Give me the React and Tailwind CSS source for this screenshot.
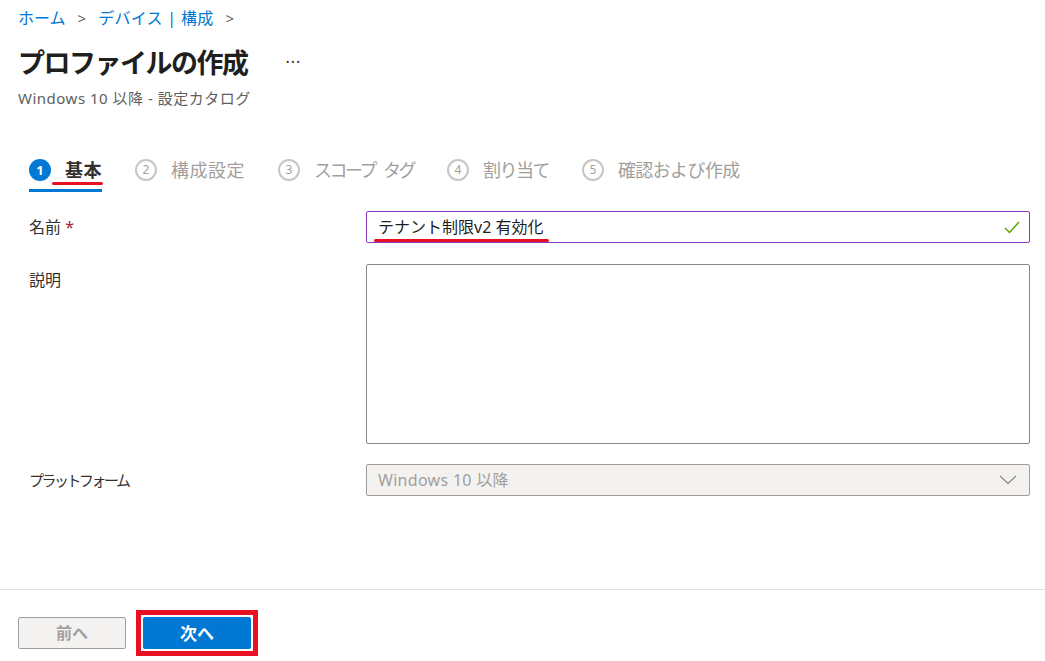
import React from "react";

const font = { fontFamily: '"Noto Sans", "Noto Sans CJK JP", sans-serif' };

const steps = [
  { n: 1, label: "基本", active: true, track: "tracking-[0.5px]" },
  { n: 2, label: "構成設定", track: "tracking-[0.5px]" },
  {
    n: 3,
    label: (
      <>
        スコープ<span className="inline-block w-[8px]" />タグ
      </>
    ),
    track: "tracking-[-2.5px]",
  },
  { n: 4, label: "割り当て", track: "tracking-[-1.5px]" },
  { n: 5, label: "確認および作成", track: "tracking-[-0.6px]" },
];

const Step = ({ step }) => (
  <div className="relative flex items-center h-[42px] gap-[14px]">
    {step.active ? (
      <div className="w-[22px] h-[22px] rounded-full bg-[#0078d4] text-white text-[13px] font-bold flex items-center justify-center leading-none">
        {step.n}
      </div>
    ) : (
      <div className="w-[22px] h-[22px] rounded-full border-2 border-[#c8c6c4] text-[#a19f9d] text-[12px] flex items-center justify-center leading-none">
        {step.n}
      </div>
    )}
    <span
      className={`text-[18px] leading-none ${step.track} ${
        step.active ? "font-bold text-[#323130]" : "text-[#a19f9d]"
      }`}>
      {step.label}
    </span>
    {step.active && (
      <>
        <div className="absolute left-0 right-0 bottom-[-1px] h-[3px] bg-[#0078d4]" />
        <div className="absolute left-[23px] right-[-1px] bottom-[6px] h-[3px] rounded-full bg-[#e81123]" />
      </>
    )}
  </div>
);

export default function App() {
  return (
    <div className="w-[1045px] h-[661px] bg-white flex flex-col text-[#323130] overflow-hidden" style={font}>
      {/* Header */}
      <div className="px-[18px] pt-[6px]">
        <div className="flex items-center gap-[12px] text-[16px] text-[#0078d4] leading-[24px]">
          <span>ホーム</span>
          <span className="text-[#605e5c] text-[15px]">&gt;</span>
          <span className="tracking-[0.3px]">デバイス | 構成</span>
          <span className="text-[#605e5c] text-[15px]">&gt;</span>
        </div>
        <div className="flex items-center mt-[14px] h-[36px]">
          <h1 className="text-[27px] font-bold leading-none tracking-[-1.5px] text-[#201f1e]">プロファイルの作成</h1>
          <span className="ml-[38px] text-[16px] text-[#323130] tracking-[1px] leading-none">···</span>
        </div>
        <div className="mt-[8px] text-[15px] text-[#605e5c] leading-[20px] tracking-[0.5px]">
          Windows 10 以降 - 設定カタログ
        </div>
      </div>

      {/* Steps */}
      <div className="flex items-center gap-[33px] pl-[29px] mt-[41px]">
        {steps.map((s) => (
          <Step key={s.n} step={s} />
        ))}
      </div>

      {/* Form */}
      <div className="pl-[29px] pr-[15px] mt-[20px] flex flex-col">
        <div className="flex items-center">
          <div className="w-[337px] text-[16px] leading-none">
            名前 <span className="text-[#a4262c]">*</span>
          </div>
          <div className="relative flex-1 h-[32px] border border-[#8a3ab9] rounded-[2px] flex items-center pl-[11px]">
            <span className="relative text-[16px] text-[#201f1e] leading-none">
              テナント制限v2 有効化
              <span className="absolute left-[-4px] right-[-6px] bottom-[-7px] h-[3px] rounded-full bg-[#e81123]" />
            </span>
            <svg className="absolute right-[9px] top-[8px]" width="16" height="14" viewBox="0 0 16 14">
              <path d="M1 8 L5.5 12.5 L15 2" fill="none" stroke="#57a300" strokeWidth="1.4" />
            </svg>
          </div>
        </div>

        <div className="flex mt-[21px]">
          <div className="w-[337px] text-[16px] leading-none pt-[8px]">説明</div>
          <div className="flex-1 h-[180px] border border-[#8a8886] rounded-[2px]" />
        </div>

        <div className="flex items-center mt-[20px]">
          <div className="w-[337px] text-[15px] leading-none tracking-[-2.5px]">プラットフォーム</div>
          <div className="relative flex-1 h-[32px] border border-[#a19f9d] rounded-[2px] bg-[#f3f2f1] flex items-center pl-[11px]">
            <span className="text-[16px] text-[#a19f9d] leading-none tracking-[0.3px]">Windows 10 以降</span>
            <svg className="absolute right-[12px] top-[9px]" width="18" height="12" viewBox="0 0 18 12">
              <path d="M1 2 L9 9.5 L17 2" fill="none" stroke="#8a8886" strokeWidth="1.2" />
            </svg>
          </div>
        </div>
      </div>

      <div className="flex-1" />

      {/* Footer */}
      <div className="border-t border-[#e1dfdd] h-[72px] flex items-start px-[18px] pt-[27px] gap-[10px]">
        <button className="w-[108px] h-[32px] rounded-[2px] border border-[#a19f9d] bg-[#f3f2f1] text-[#a19f9d] text-[16px] font-bold leading-none">
          前へ
        </button>
        <div className="mt-[-7px] border-[5px] border-[#e81123] p-[2px]">
          <button className="w-[108px] h-[32px] rounded-[2px] bg-[#0078d4] text-white text-[17px] font-bold leading-none block">
            次へ
          </button>
        </div>
      </div>
    </div>
  );
}
